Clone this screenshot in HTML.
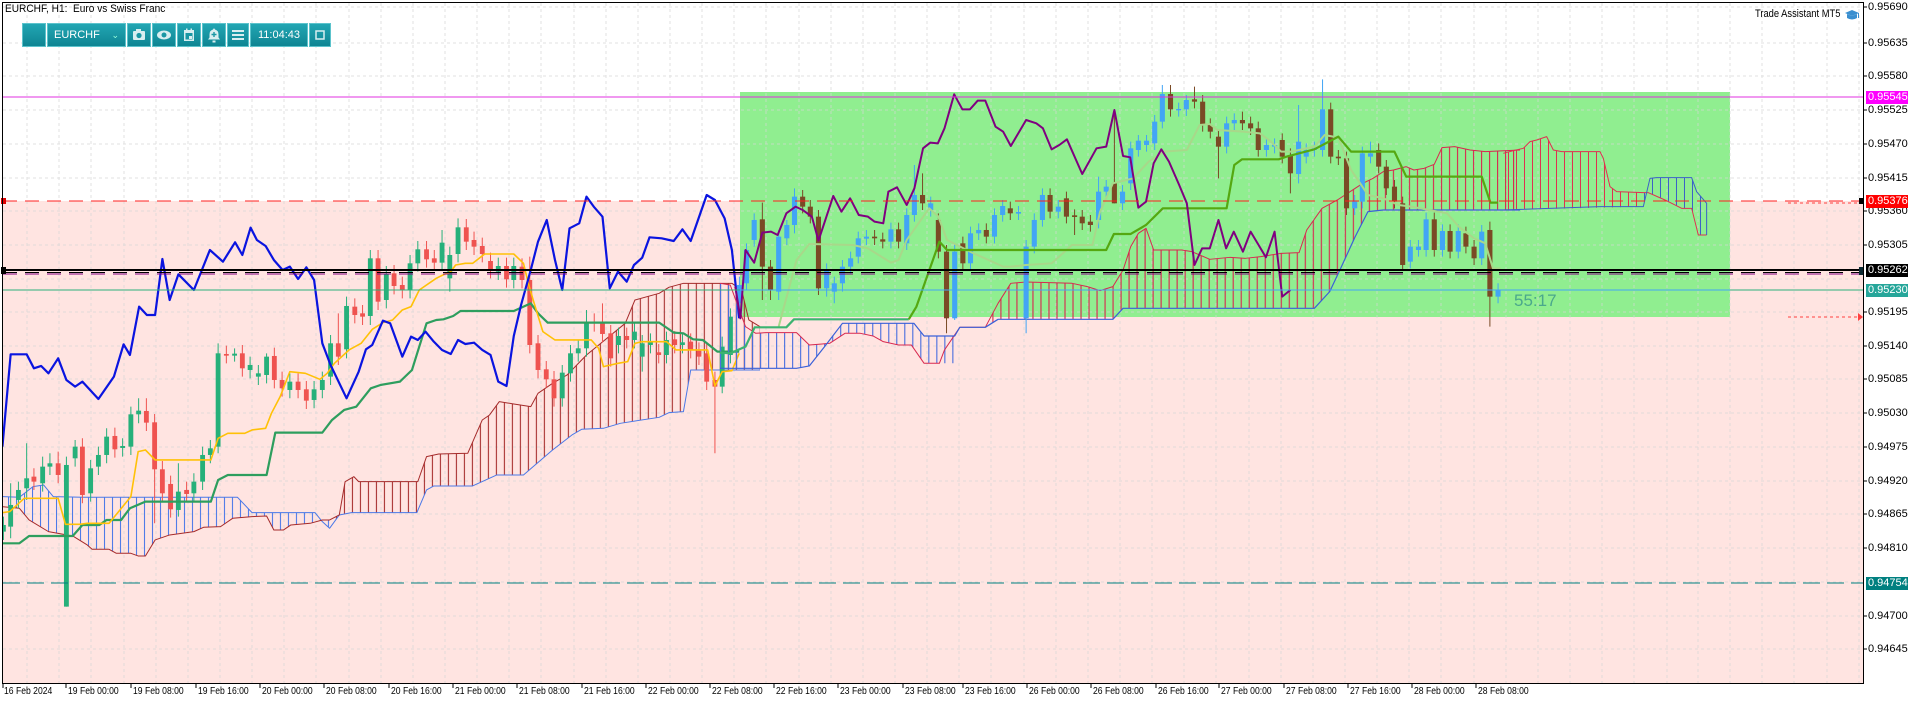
<!DOCTYPE html>
<html><head><meta charset="utf-8"><style>
html,body{margin:0;padding:0;background:#fff;width:1916px;height:704px;overflow:hidden;font-family:"Liberation Sans",sans-serif}
svg{position:absolute;left:0;top:0}
.l{fill:none;vector-effect:non-scaling-stroke;stroke-linejoin:round}
.w{vector-effect:non-scaling-stroke;stroke-width:1}
.pl{position:absolute;left:1868px;font-size:11px;color:#000;line-height:12px}
.hl{position:absolute;left:1866px;width:40px;height:13px;font-size:11px;line-height:13px;color:#fff;padding-left:2px}
.tl{position:absolute;top:686px;font-size:10px;color:#000;white-space:nowrap;transform:scaleX(0.86);transform-origin:0 0}
.tb{position:absolute;top:23px;height:24px;background:linear-gradient(#22a6b3,#0f8593);border:1px solid #5cc3cc;box-sizing:border-box;color:#fff;font-size:11px;line-height:22px}
</style></head><body>
<svg width="1916" height="704" viewBox="0 0 1916 704">
<defs>
<pattern id="p6r" patternUnits="userSpaceOnUse" width="16.5" height="10"><rect x="0" y="0" width="2.2" height="10" fill="#a52a2a"/></pattern>
<pattern id="p6b" patternUnits="userSpaceOnUse" width="16.5" height="10"><rect x="0" y="0" width="2.2" height="10" fill="#4a78e8"/></pattern>
<pattern id="p7r" patternUnits="userSpaceOnUse" width="15.7" height="10"><rect x="0" y="0" width="2.2" height="10" fill="#d8284f"/></pattern>
<pattern id="p7b" patternUnits="userSpaceOnUse" width="15.7" height="10"><rect x="0" y="0" width="2.2" height="10" fill="#4a6fe0"/></pattern>
<pattern id="p2r" patternUnits="userSpaceOnUse" width="24" height="10"><rect x="0" y="0" width="3" height="10" fill="#e03050"/></pattern>
<pattern id="p2b" patternUnits="userSpaceOnUse" width="24" height="10"><rect x="0" y="0" width="3" height="10" fill="#3a60c8"/></pattern>
<clipPath id="cc"><rect x="3" y="3" width="1860" height="680"/></clipPath>
</defs>
<rect x="3" y="201" width="1860" height="482" fill="#ffe4e1"/>
<rect x="740" y="92" width="990" height="225" fill="#90ee90"/>
<g stroke="#d6d6d6" stroke-dasharray="3,3" stroke-width="1" opacity="0.7">
<path d="M27 3V683M59 3V683M91 3V683M124 3V683M156 3V683M188 3V683M220 3V683M252 3V683M284 3V683M316 3V683M349 3V683M381 3V683M413 3V683M445 3V683M477 3V683M509 3V683M541 3V683M574 3V683M606 3V683M638 3V683M670 3V683M702 3V683M734 3V683M766 3V683M799 3V683M831 3V683M863 3V683M895 3V683M927 3V683M959 3V683M991 3V683M1024 3V683M1056 3V683M1088 3V683M1120 3V683M1152 3V683M1184 3V683M1216 3V683M1249 3V683M1281 3V683M1313 3V683M1345 3V683M1377 3V683M1409 3V683M1441 3V683M1474 3V683M1506 3V683M1538 3V683M1570 3V683M1602 3V683M1634 3V683M1667 3V683M1698 3V683M1730 3V683M1762 3V683M1794 3V683M1827 3V683M1859 3V683"/>
<path d="M3 7H1863M3 43H1863M3 76H1863M3 110H1863M3 144H1863M3 178H1863M3 211H1863M3 245H1863M3 279H1863M3 312H1863M3 346H1863M3 379H1863M3 413H1863M3 447H1863M3 481H1863M3 514H1863M3 548H1863M3 582H1863M3 616H1863M3 649H1863"/>
</g>
<g clip-path="url(#cc)">
<g transform="translate(0,180) scale(0.4847,0.3333)">
<polygon fill="url(#p6b)" points="5,950 40,952 68,920 90,915 110,950 170,952 490,952 520,998 650,998 665,1025 680,1045 680,1020 665,1020 640,1030 600,1035 585,1050 565,1050 550,1008 520,1010 480,1015 455,1040 420,1042 400,1055 350,1065 320,1080 300,1128 285,1128 270,1120 240,1120 225,1108 190,1108 180,1095 150,1068 100,1055 60,1020 40,985 5,980"/>
<polygon fill="url(#p6r)" points="680,1020 700,1005 712,905 730,890 740,905 862,905 880,830 905,822 965,820 995,720 1010,705 1030,665 1060,672 1095,680 1110,640 1140,610 1170,585 1210,525 1290,430 1310,360 1360,340 1380,322 1410,310 1510,310 1530,330 1545,420 1568,440 1568,570 1425,570 1410,695 1380,698 1360,712 1280,730 1245,745 1200,748 1180,765 1140,810 1100,860 1080,885 1025,885 975,918 895,918 880,930 860,998 725,998 700,1005 680,1045"/>
<polyline class="l" stroke="#4a78e8" stroke-width="1" points="5,950 40,952 68,920 90,915 110,950 170,952 490,952 520,998 650,998 665,1025 680,1045 700,1005 725,998 860,998 880,930 895,918 975,918 1025,885 1080,885 1100,860 1140,810 1180,765 1200,748 1245,745 1280,730 1360,712 1380,698 1410,695 1425,570 1568,570"/>
<polyline class="l" stroke="#a52a2a" stroke-width="1" points="5,980 40,985 60,1020 100,1055 150,1068 180,1095 190,1108 225,1108 240,1120 270,1120 285,1128 300,1128 320,1080 350,1065 400,1055 420,1042 455,1040 480,1015 520,1010 550,1008 565,1050 585,1050 600,1035 640,1030 665,1020 680,1020 700,1005 712,905 730,890 740,905 862,905 880,830 905,822 965,820 995,720 1010,705 1030,665 1060,672 1095,680 1110,640 1140,610 1170,585 1210,525 1290,430 1310,360 1360,340 1380,322 1410,310 1510,310 1530,330 1545,420 1568,440"/>
<path class="w" stroke="#26b07a" d="M7 1010V1080M22 910V1075M38 905V985M55 790V960M88 830V935M103 820V885M137 830V1280M155 780V860M187 840V965M203 800V885M220 745V850M253 775V830M270 680V825M286 655V730M368 850V1010M400 880V965M418 800V930M434 780V850M450 490V820M484 505V545M516 530V595M533 555V615M550 520V610M598 580V655M648 603V685M665 575V655M682 465V615M715 350V535M764 210V435M797 258V385M846 225V355M862 183V275M912 150V273M928 200V335M945 115V247M1028 233V300M1060 233V325M1160 555V680M1177 495V605M1193 480V545M1210 390V530M1276 443V520M1309 430V505M1325 465V575M1342 460V520M1375 455V550M1408 462V520M1490 470V640M1507 385V550"/>
<path class="w" stroke="#ef5350" d="M70 865V930M120 815V910M170 775V970M237 743V833M302 655V753M319 702V1030M335 843V965M352 887V1013M385 905V967M467 497V550M500 495V590M566 503V625M582 575V650M615 580V655M632 603V687M698 400V555M732 355V430M748 375V435M780 210V390M813 255V343M830 290V355M880 183V263M896 210V273M962 117V210M978 155V225M995 173V247M1012 218V295M1045 233V323M1077 235V325M1093 230V520M1110 465V595M1127 543V623M1143 573V680M1226 400V455M1243 370V487M1260 435V560M1293 443V505M1359 492V550M1392 453V520M1425 460V535M1442 487V555M1458 490V630M1475 575V820"/>
<g fill="#26b07a">
<rect x="2" y="1035" width="10" height="20"/><rect x="17" y="975" width="10" height="65"/><rect x="33" y="930" width="10" height="30"/><rect x="50" y="895" width="10" height="30"/><rect x="83" y="860" width="10" height="50"/><rect x="98" y="850" width="10" height="10"/><rect x="132" y="855" width="10" height="425"/><rect x="150" y="800" width="10" height="35"/><rect x="182" y="865" width="10" height="75"/><rect x="198" y="825" width="10" height="35"/><rect x="215" y="770" width="10" height="55"/><rect x="248" y="798" width="10" height="6"/><rect x="265" y="703" width="10" height="97"/><rect x="281" y="692" width="10" height="11"/><rect x="363" y="935" width="10" height="55"/><rect x="395" y="905" width="10" height="35"/><rect x="413" y="825" width="10" height="80"/><rect x="429" y="805" width="10" height="20"/><rect x="445" y="520" width="10" height="280"/><rect x="479" y="521" width="10" height="6"/><rect x="511" y="555" width="10" height="15"/><rect x="528" y="580" width="10" height="10"/><rect x="545" y="530" width="10" height="55"/><rect x="593" y="605" width="10" height="25"/><rect x="643" y="628" width="10" height="32"/><rect x="660" y="600" width="10" height="30"/><rect x="677" y="490" width="10" height="100"/><rect x="710" y="378" width="10" height="130"/><rect x="759" y="235" width="10" height="173"/><rect x="792" y="282" width="10" height="78"/><rect x="841" y="250" width="10" height="80"/><rect x="857" y="208" width="10" height="42"/><rect x="907" y="188" width="10" height="60"/><rect x="923" y="225" width="10" height="70"/><rect x="940" y="142" width="10" height="80"/><rect x="1023" y="258" width="10" height="17"/><rect x="1055" y="258" width="10" height="42"/><rect x="1155" y="578" width="10" height="77"/><rect x="1172" y="520" width="10" height="60"/><rect x="1188" y="505" width="10" height="15"/><rect x="1205" y="425" width="10" height="80"/><rect x="1271" y="468" width="10" height="27"/><rect x="1304" y="455" width="10" height="25"/><rect x="1320" y="490" width="10" height="40"/><rect x="1337" y="485" width="10" height="10"/><rect x="1370" y="480" width="10" height="45"/><rect x="1403" y="487" width="10" height="8"/><rect x="1485" y="500" width="10" height="120"/><rect x="1502" y="410" width="10" height="115"/>
</g>
<g fill="#ef5350">
<rect x="65" y="890" width="10" height="15"/><rect x="115" y="850" width="10" height="35"/><rect x="165" y="800" width="10" height="145"/><rect x="232" y="768" width="10" height="40"/><rect x="297" y="693" width="10" height="35"/><rect x="314" y="727" width="10" height="141"/><rect x="330" y="868" width="10" height="72"/><rect x="347" y="912" width="10" height="76"/><rect x="380" y="930" width="10" height="12"/><rect x="462" y="522" width="10" height="5"/><rect x="495" y="520" width="10" height="45"/><rect x="561" y="528" width="10" height="72"/><rect x="577" y="600" width="10" height="25"/><rect x="610" y="605" width="10" height="25"/><rect x="627" y="628" width="10" height="34"/><rect x="693" y="490" width="10" height="40"/><rect x="727" y="380" width="10" height="25"/><rect x="743" y="400" width="10" height="10"/><rect x="775" y="235" width="10" height="130"/><rect x="808" y="280" width="10" height="38"/><rect x="825" y="315" width="10" height="15"/><rect x="875" y="208" width="10" height="30"/><rect x="891" y="235" width="10" height="13"/><rect x="957" y="142" width="10" height="43"/><rect x="973" y="180" width="10" height="20"/><rect x="990" y="198" width="10" height="24"/><rect x="1007" y="243" width="10" height="27"/><rect x="1040" y="258" width="10" height="40"/><rect x="1072" y="260" width="10" height="40"/><rect x="1088" y="300" width="10" height="195"/><rect x="1105" y="490" width="10" height="80"/><rect x="1122" y="568" width="10" height="30"/><rect x="1138" y="598" width="10" height="57"/><rect x="1221" y="425" width="10" height="5"/><rect x="1238" y="425" width="10" height="37"/><rect x="1255" y="460" width="10" height="75"/><rect x="1288" y="468" width="10" height="12"/><rect x="1354" y="517" width="10" height="8"/><rect x="1387" y="478" width="10" height="17"/><rect x="1420" y="485" width="10" height="25"/><rect x="1437" y="512" width="10" height="18"/><rect x="1453" y="520" width="10" height="85"/><rect x="1470" y="600" width="10" height="20"/>
</g>
<polyline class="l" stroke="#2e9e5e" stroke-width="2.2" points="5,1090 40,1090 60,1068 150,1068 170,1035 205,1035 220,1020 250,1020 268,985 300,965 435,965 450,900 470,885 550,885 568,758 665,758 685,720 710,690 735,680 765,625 785,615 825,605 850,570 880,430 900,420 915,418 935,408 950,393 1060,393 1095,370 1110,400 1130,428 1360,428 1390,458 1410,460 1430,478 1450,480 1480,515 1525,515"/>
<polyline class="l" stroke="#ffc107" stroke-width="1.6" points="5,998 20,995 50,955 120,955 135,1033 165,1033 180,1030 225,1030 270,950 285,815 300,810 320,840 435,840 450,775 470,760 505,760 520,750 548,745 560,700 578,650 598,575 630,580 660,598 675,580 690,550 720,510 745,490 768,448 790,428 810,420 830,390 848,380 865,330 900,295 918,282 930,275 940,255 960,250 975,250 1000,222 1060,222 1080,250 1090,310 1100,360 1120,455 1145,480 1220,480 1235,505 1245,560 1275,550 1295,545 1310,490 1325,485 1375,485 1395,510 1460,510 1475,618 1490,575 1510,572 1525,520"/>
<polyline class="l" stroke="#0a14e0" stroke-width="2.2" points="5,800 22,523 55,523 70,565 85,558 100,580 120,535 137,600 155,620 170,605 203,657 235,590 255,493 268,525 287,380 303,405 320,405 335,237 350,360 368,283 400,330 433,210 460,245 485,187 500,225 517,143 530,180 548,198 565,240 583,270 598,260 615,297 632,262 648,300 665,490 682,555 715,655 740,575 755,508 768,495 790,422 805,430 830,530 848,470 862,480 878,455 895,485 912,510 930,522 945,480 960,492 978,488 995,510 1012,525 1028,605 1045,618 1060,468 1075,375 1095,270 1110,185 1128,120 1145,240 1160,330 1175,145 1195,130 1210,50 1225,80 1243,110 1258,325 1275,275 1293,305 1308,255 1325,233 1340,172 1365,175 1390,183 1408,148 1425,183 1458,45 1475,60 1495,115 1510,210 1525,415"/>
</g>
<g transform="translate(720,70) scale(0.5102,0.3333)">
<polygon fill="url(#p7b)" points="0,895 150,895 175,888 205,830 240,760 380,760 400,798 460,798 470,772 470,880 440,880 400,880 375,825 350,825 320,815 300,798 275,790 245,790 215,820 200,822 175,825 150,788 90,788 70,790 50,770 20,645 0,640"/>
<polygon fill="url(#p7r)" points="470,772 520,772 545,700 570,640 600,636 690,640 720,650 745,662 770,650 790,600 805,530 820,490 835,475 850,540 905,540 925,545 960,568 1000,562 1030,565 1060,560 1100,550 1135,548 1150,480 1180,415 1210,390 1230,370 1260,340 1280,325 1300,305 1320,300 1345,290 1360,300 1380,295 1400,283 1415,233 1440,230 1470,240 1500,245 1568,240 1568,420 1300,420 1270,425 1245,500 1215,600 1195,665 1165,715 790,715 770,748 545,748 520,772"/>
<polyline class="l" stroke="#d8284f" stroke-width="1" points="0,640 20,645 50,770 70,790 90,788 150,788 175,825 200,822 215,820 245,790 275,790 300,798 320,815 350,825 375,825 400,880 430,880 440,840 470,772 520,772 545,700 570,640 600,636 690,640 720,650 745,662 770,650 790,600 805,530 820,490 835,475 850,540 905,540 925,545 960,568 1000,562 1030,565 1060,560 1100,550 1135,548 1150,480 1180,415 1210,390 1230,370 1260,340 1280,325 1300,305 1320,300 1345,290 1360,300 1380,295 1400,283 1415,233 1440,230 1470,240 1500,245 1568,240"/>
<polyline class="l" stroke="#3a60d8" stroke-width="1.2" points="0,895 150,895 175,888 205,830 240,760 380,760 400,798 460,798 470,772 520,772 545,748 770,748 790,715 1165,715 1195,665 1215,600 1245,500 1270,425 1300,420 1568,420"/>
<path class="w" stroke="#42a5f5" d="M38 620V720M52 520V660M67 430V530M115 480V690M131 450V525M146 355V490M209 580V680M224 620V700M240 570V665M256 545V610M271 485V580M287 480V525M335 458V535M366 415V540M381 285V455M413 380V440M460 520V750M491 470V600M507 460V510M538 415V520M554 390V455M585 408V450M600 510V790M616 430V550M632 355V470M663 390V445M742 320V475M757 330V385M789 345V420M805 215V360M820 195V260M836 195V245M852 135V240M867 45V175M899 98V140M914 75V138M993 140V250M1008 130V180M1071 205V260M1087 205V250M1134 105V340M1149 220V280M1165 215V260M1181 28V260M1244 375V435M1259 230V415M1275 215V280M1353 510V595M1369 510V560M1384 428V560M1416 463V560M1447 463V565M1493 465V585M1525 640V700"/>
<path class="w" stroke="#7a4a25" d="M83 398V690M99 570V690M162 360V430M177 390V460M193 420V675M303 480V525M319 488V535M350 458V535M397 310V420M428 430V565M444 525V790M476 500V600M522 460V520M569 395V450M647 355V445M679 365V460M695 418V495M710 420V480M726 435V485M773 120V400M883 45V140M930 50V115M946 75V185M961 145V205M977 180V325M1024 125V180M1040 140V195M1055 155V260M1102 190V280M1118 235V370M1197 98V280M1212 240V285M1228 245V435M1291 220V310M1306 270V375M1322 330V415M1338 380V600M1400 428V560M1431 463V565M1462 470V550M1478 510V585M1509 455V770"/>
<g fill="#42a5f5">
<rect x="33" y="645" width="10" height="55"/><rect x="47" y="540" width="10" height="100"/><rect x="62" y="450" width="10" height="60"/><rect x="110" y="500" width="10" height="165"/><rect x="126" y="465" width="10" height="40"/><rect x="141" y="380" width="10" height="85"/><rect x="204" y="600" width="10" height="55"/><rect x="219" y="640" width="10" height="25"/><rect x="235" y="590" width="10" height="50"/><rect x="251" y="565" width="10" height="25"/><rect x="266" y="505" width="10" height="55"/><rect x="282" y="500" width="10" height="6"/><rect x="330" y="478" width="10" height="37"/><rect x="361" y="435" width="10" height="85"/><rect x="376" y="375" width="10" height="60"/><rect x="408" y="400" width="10" height="20"/><rect x="455" y="545" width="10" height="200"/><rect x="486" y="490" width="10" height="90"/><rect x="502" y="480" width="10" height="10"/><rect x="533" y="435" width="10" height="65"/><rect x="549" y="408" width="10" height="27"/><rect x="580" y="426" width="10" height="5"/><rect x="595" y="530" width="10" height="215"/><rect x="611" y="450" width="10" height="80"/><rect x="627" y="375" width="10" height="75"/><rect x="658" y="410" width="10" height="15"/><rect x="737" y="365" width="10" height="85"/><rect x="752" y="350" width="10" height="15"/><rect x="784" y="365" width="10" height="35"/><rect x="800" y="235" width="10" height="105"/><rect x="815" y="212" width="10" height="28"/><rect x="831" y="212" width="10" height="13"/><rect x="847" y="155" width="10" height="65"/><rect x="862" y="72" width="10" height="83"/><rect x="894" y="117" width="10" height="4"/><rect x="909" y="90" width="10" height="28"/><rect x="988" y="160" width="10" height="70"/><rect x="1003" y="150" width="10" height="10"/><rect x="1066" y="225" width="10" height="15"/><rect x="1082" y="225" width="10" height="5"/><rect x="1129" y="215" width="10" height="97"/><rect x="1144" y="240" width="10" height="20"/><rect x="1160" y="235" width="10" height="5"/><rect x="1176" y="118" width="10" height="122"/><rect x="1239" y="395" width="10" height="20"/><rect x="1254" y="250" width="10" height="145"/><rect x="1270" y="250" width="10" height="10"/><rect x="1348" y="530" width="10" height="45"/><rect x="1364" y="530" width="10" height="10"/><rect x="1379" y="448" width="10" height="92"/><rect x="1411" y="483" width="10" height="57"/><rect x="1442" y="483" width="10" height="62"/><rect x="1488" y="485" width="10" height="80"/><rect x="1520" y="660" width="10" height="20"/>
</g>
<g fill="#7a4a25">
<rect x="78" y="448" width="10" height="142"/><rect x="94" y="590" width="10" height="70"/><rect x="157" y="380" width="10" height="30"/><rect x="172" y="410" width="10" height="30"/><rect x="188" y="440" width="10" height="215"/><rect x="298" y="500" width="10" height="5"/><rect x="314" y="508" width="10" height="7"/><rect x="345" y="478" width="10" height="37"/><rect x="392" y="375" width="10" height="25"/><rect x="423" y="450" width="10" height="95"/><rect x="439" y="545" width="10" height="200"/><rect x="471" y="520" width="10" height="60"/><rect x="517" y="480" width="10" height="20"/><rect x="564" y="415" width="10" height="15"/><rect x="642" y="375" width="10" height="50"/><rect x="674" y="385" width="10" height="55"/><rect x="690" y="436" width="10" height="5"/><rect x="705" y="440" width="10" height="20"/><rect x="721" y="455" width="10" height="10"/><rect x="768" y="340" width="10" height="60"/><rect x="878" y="72" width="10" height="46"/><rect x="925" y="88" width="10" height="7"/><rect x="941" y="95" width="10" height="70"/><rect x="956" y="165" width="10" height="20"/><rect x="972" y="200" width="10" height="30"/><rect x="1019" y="150" width="10" height="10"/><rect x="1035" y="160" width="10" height="15"/><rect x="1050" y="175" width="10" height="65"/><rect x="1097" y="210" width="10" height="50"/><rect x="1113" y="255" width="10" height="55"/><rect x="1192" y="118" width="10" height="142"/><rect x="1207" y="260" width="10" height="5"/><rect x="1223" y="265" width="10" height="150"/><rect x="1286" y="240" width="10" height="50"/><rect x="1301" y="290" width="10" height="65"/><rect x="1317" y="350" width="10" height="45"/><rect x="1333" y="400" width="10" height="185"/><rect x="1395" y="448" width="10" height="92"/><rect x="1426" y="483" width="10" height="62"/><rect x="1457" y="490" width="10" height="40"/><rect x="1473" y="530" width="10" height="35"/><rect x="1504" y="480" width="10" height="200"/>
</g>
<polyline class="l" stroke="#a8d88a" stroke-width="2" points="115,770 150,570 175,522 260,525 290,535 335,578 350,570 366,510 410,415 428,440 445,510 490,545 555,590 570,590 600,585 650,580 690,525 730,525 745,425 770,340 810,325 840,275 870,245 915,240 940,165 960,162 975,180 1025,185 1058,190 1080,215 1100,245 1120,245 1165,230 1185,195 1212,203 1237,300 1270,375 1300,385 1330,405 1355,410 1390,420 1425,430 1448,470 1478,505 1500,520 1515,595 1530,595"/>
<polyline class="l" stroke="#3cb371" stroke-width="2.2" points="0,848 20,850 50,830 68,772 130,772 145,748 370,748"/>
<polyline class="l" stroke="#55a811" stroke-width="2.2" points="370,748 385,710 430,515 445,540 757,540 772,492 805,492 835,465 868,415 993,415 1008,285 1023,268 1095,268 1110,260 1165,238 1212,200 1237,245 1322,245 1345,320 1493,320 1510,398 1525,398"/>
<polyline class="l" stroke="#800080" stroke-width="2" points="30,650 40,745 50,540 67,578 83,488 100,485 113,495 130,430 148,410 162,420 180,440 193,512 222,378 238,425 255,385 272,435 290,440 303,455 320,460 330,365 347,352 366,405 381,355 398,235 412,218 427,220 440,175 459,73 475,118 490,118 505,92 520,92 540,170 555,185 570,228 600,150 620,160 633,175 650,238 665,225 680,208 710,312 738,235 757,230 773,120 790,258 804,262 820,413 835,395 850,280 865,238 880,275 900,345 915,400 930,585 945,535 960,535 977,450 992,535 1007,485 1025,545 1040,485 1070,562 1087,485 1102,680 1118,660"/>
</g>
<g transform="translate(1500,0) scale(0.3333)">
<polygon fill="url(#p2r)" points="10,460 40,452 70,445 90,425 110,420 140,410 160,450 185,455 300,455 310,475 330,560 350,575 430,578 430,620 10,630"/>
<polygon fill="url(#p2b)" points="430,578 445,578 495,600 545,625 575,625 595,705 620,705 620,610 590,575 575,533 470,533 450,535 430,620"/>
<polyline class="l" stroke="#e03050" stroke-width="1" points="10,460 40,452 70,445 90,425 110,420 140,410 160,450 185,455 300,455 310,475 330,560 350,575 430,578 445,578 495,600 545,625 575,625 595,705 620,705"/>
<polyline class="l" stroke="#3a60c8" stroke-width="1" points="10,630 300,620 430,620 450,535 470,533 575,533 590,575 620,610 620,705"/>
</g>
<line x1="3" y1="97" x2="1863" y2="97" stroke="#e030e0" stroke-width="1"/>
<line x1="3" y1="201" x2="1863" y2="201" stroke="#ff2020" stroke-width="1" stroke-dasharray="14,8"/>
<line x1="3" y1="274" x2="1863" y2="274" stroke="#800080" stroke-width="1" stroke-dasharray="14,8"/>
<line x1="3" y1="270" x2="1863" y2="270" stroke="#000" stroke-width="2"/>
<line x1="3" y1="272.5" x2="1863" y2="272.5" stroke="#000" stroke-width="1" stroke-dasharray="14,8"/>
<line x1="3" y1="290" x2="1863" y2="290" stroke="#2eb07a" stroke-width="1"/>
<line x1="740" y1="290" x2="1730" y2="290" stroke="#42a5f5" stroke-width="1"/>
<line x1="3" y1="583" x2="1863" y2="583" stroke="#008080" stroke-width="1" stroke-dasharray="17,7"/>
<line x1="1788" y1="203" x2="1858" y2="203" stroke="#ff4040" stroke-width="1" stroke-dasharray="3,3"/>
<line x1="1788" y1="317" x2="1858" y2="317" stroke="#ff4040" stroke-width="1" stroke-dasharray="3,3"/>
<polygon points="1858,313 1863,317 1858,321" fill="#ff4040"/>
</g>
<rect x="1" y="198" width="5" height="6" fill="#d00"/>
<rect x="1" y="267" width="5" height="7" fill="#000"/>
<rect x="1859" y="198" width="5" height="6" fill="#000"/>
<rect x="1859" y="267" width="5" height="8" fill="#0d2a33"/>
<path d="M2.5 2.5H1863.5V683.5H2.5Z" fill="none" stroke="#000" stroke-width="1"/>
<g stroke="#000" stroke-width="1">
<path d="M1863 7h4M1863 43h4M1863 76h4M1863 110h4M1863 144h4M1863 178h4M1863 211h4M1863 245h4M1863 312h4M1863 346h4M1863 379h4M1863 413h4M1863 447h4M1863 481h4M1863 514h4M1863 548h4M1863 616h4M1863 649h4"/>
<path d="M3 683v5M66 683v5M131 683v5M196 683v5M260 683v5M324 683v5M389 683v5M453 683v5M517 683v5M582 683v5M646 683v5M710 683v5M774 683v5M838 683v5M903 683v5M963 683v5M1027 683v5M1091 683v5M1156 683v5M1219 683v5M1284 683v5M1348 683v5M1412 683v5M1476 683v5"/>
</g>
<g fill="#3a8fd0"><polygon points="1845,13 1852,10 1859,13 1852,16"/><path d="M1847 14v4q5 3 10 0v-4l-5 2z"/><rect x="1858" y="13" width="1" height="5"/></g>
<text x="1514" y="306" font-family="Liberation Sans, sans-serif" font-size="17" fill="#4aa88c">55:17</text>
</svg>
<div style="position:absolute;left:5px;top:3px;font-size:11px;line-height:12px;transform:scaleX(0.92);transform-origin:0 0">EURCHF, H1:&nbsp; Euro vs Swiss Franc</div>
<div style="position:absolute;left:1755px;top:8px;font-size:11px;line-height:12px;transform:scaleX(0.85);transform-origin:0 0;white-space:nowrap">Trade Assistant MT5</div>
<div class="tb" style="left:22px;width:24px"></div>
<div class="tb" style="left:47px;width:79px;padding-left:6px">EURCHF<span style="position:absolute;right:6px;top:0;font-size:9px;color:#9fd">&#8964;</span></div>
<div class="tb" style="left:127px;width:24px;text-align:center"><svg width="22" height="22" viewBox="0 0 22 22" style="position:relative"><rect x="5" y="7" width="12" height="9" rx="1" fill="#d8eef0"/><rect x="8" y="5" width="5" height="3" fill="#d8eef0"/><circle cx="11" cy="11.5" r="2.6" fill="#1a97a4"/></svg></div>
<div class="tb" style="left:152px;width:24px"><svg width="22" height="22" viewBox="0 0 22 22" style="position:relative"><ellipse cx="11" cy="11" rx="7" ry="4.5" fill="#d8eef0"/><circle cx="11" cy="11" r="2.5" fill="#1a97a4"/></svg></div>
<div class="tb" style="left:177px;width:24px"><svg width="22" height="22" viewBox="0 0 22 22" style="position:relative"><rect x="6" y="6" width="10" height="11" fill="#d8eef0"/><rect x="7.5" y="9" width="7" height="6.5" fill="#1a97a4"/><rect x="11" y="12" width="3" height="3" fill="#d8eef0"/><rect x="8" y="4.5" width="1.5" height="3" fill="#d8eef0"/><rect x="12.5" y="4.5" width="1.5" height="3" fill="#d8eef0"/></svg></div>
<div class="tb" style="left:202px;width:24px"><svg width="22" height="22" viewBox="0 0 22 22" style="position:relative"><path d="M11 4.5a1 1 0 0 1 1 1q3.5 1 3.5 5v3l1.5 2h-12l1.5-2v-3q0-4 3.5-5a1 1 0 0 1 1-1z" fill="#d8eef0"/><rect x="9.5" y="16.5" width="3" height="2" fill="#d8eef0"/><path d="M11 8v5M8.5 10.5h5" stroke="#1a97a4" stroke-width="1.4"/></svg></div>
<div class="tb" style="left:227px;width:22px"><svg width="20" height="22" viewBox="0 0 20 22" style="position:relative"><path d="M4 7h12M4 11h12M4 15h12" stroke="#d8eef0" stroke-width="2"/></svg></div>
<div class="tb" style="left:250px;width:58px;text-align:center">11:04:43</div>
<div class="tb" style="left:309px;width:22px"><svg width="20" height="22" viewBox="0 0 20 22" style="position:relative"><rect x="6" y="7" width="8" height="8" fill="none" stroke="#d8eef0" stroke-width="1.5"/></svg></div>
<div class="pl" style="top:1px">0.95690</div>
<div class="pl" style="top:37px">0.95635</div>
<div class="pl" style="top:70px">0.95580</div>
<div class="pl" style="top:104px">0.95525</div>
<div class="pl" style="top:138px">0.95470</div>
<div class="pl" style="top:172px">0.95415</div>
<div class="pl" style="top:205px">0.95360</div>
<div class="pl" style="top:239px">0.95305</div>
<div class="pl" style="top:306px">0.95195</div>
<div class="pl" style="top:340px">0.95140</div>
<div class="pl" style="top:373px">0.95085</div>
<div class="pl" style="top:407px">0.95030</div>
<div class="pl" style="top:441px">0.94975</div>
<div class="pl" style="top:475px">0.94920</div>
<div class="pl" style="top:508px">0.94865</div>
<div class="pl" style="top:542px">0.94810</div>
<div class="pl" style="top:610px">0.94700</div>
<div class="pl" style="top:643px">0.94645</div>
<div class="hl" style="top:91px;background:#ff00ff">0.95545</div>
<div class="hl" style="top:195px;background:#ff0000">0.95376</div>
<div class="hl" style="top:264px;background:#000">0.95262</div>
<div class="hl" style="top:284px;background:#26a69a">0.95230</div>
<div class="hl" style="top:577px;background:#008080">0.94754</div>
<div class="tl" style="left:4px">16 Feb 2024</div>
<div class="tl" style="left:68px">19 Feb 00:00</div>
<div class="tl" style="left:133px">19 Feb 08:00</div>
<div class="tl" style="left:198px">19 Feb 16:00</div>
<div class="tl" style="left:262px">20 Feb 00:00</div>
<div class="tl" style="left:326px">20 Feb 08:00</div>
<div class="tl" style="left:391px">20 Feb 16:00</div>
<div class="tl" style="left:455px">21 Feb 00:00</div>
<div class="tl" style="left:519px">21 Feb 08:00</div>
<div class="tl" style="left:584px">21 Feb 16:00</div>
<div class="tl" style="left:648px">22 Feb 00:00</div>
<div class="tl" style="left:712px">22 Feb 08:00</div>
<div class="tl" style="left:776px">22 Feb 16:00</div>
<div class="tl" style="left:840px">23 Feb 00:00</div>
<div class="tl" style="left:905px">23 Feb 08:00</div>
<div class="tl" style="left:965px">23 Feb 16:00</div>
<div class="tl" style="left:1029px">26 Feb 00:00</div>
<div class="tl" style="left:1093px">26 Feb 08:00</div>
<div class="tl" style="left:1158px">26 Feb 16:00</div>
<div class="tl" style="left:1221px">27 Feb 00:00</div>
<div class="tl" style="left:1286px">27 Feb 08:00</div>
<div class="tl" style="left:1350px">27 Feb 16:00</div>
<div class="tl" style="left:1414px">28 Feb 00:00</div>
<div class="tl" style="left:1478px">28 Feb 08:00</div>
</body></html>
